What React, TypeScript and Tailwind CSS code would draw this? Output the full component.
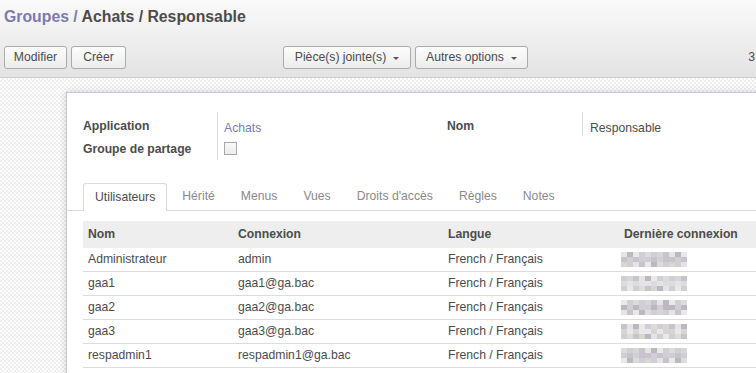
// Group form view: breadcrumb header, action buttons, sheet with fields,
// notebook tabs and the users list.

const users = [
  { name: 'Administrateur', login: 'admin' },
  { name: 'gaa1', login: 'gaa1@ga.bac' },
  { name: 'gaa2', login: 'gaa2@ga.bac' },
  { name: 'gaa3', login: 'gaa3@ga.bac' },
  { name: 'respadmin1', login: 'respadmin1@ga.bac' },
]

const tabs = ['Utilisateurs', 'Hérité', 'Menus', 'Vues', "Droits d'accès", 'Règles', 'Notes']

// greys used for the pixelated "last login" cell
const blurShades = ['#e4e4e8', '#cfcfd6', '#d8d6d2', '#bdb7c2', '#dcdcdc', '#c9c4cc', '#e9e9ea', '#d2ced6']

function Blurred({ seed }: { seed: number }) {
  const cells = []
  for (let r = 0; r < 3; r++) {
    for (let c = 0; c < 11; c++) {
      const shade = blurShades[(c * 3 + r * 5 + seed * 7 + (c * r) % 4) % blurShades.length]
      cells.push(<rect key={`${r}-${c}`} x={c * 6} y={r * 5} width={6} height={5} fill={shade} />)
    }
  }
  return (
    <svg width="66" height="15" viewBox="0 0 66 15" className="block">
      {cells}
    </svg>
  )
}

function Button({ label, caret, w }: { label: string; caret?: boolean; w: string }) {
  return (
    <button
      className={`${w} h-[23px] border border-[#ababab] rounded-[3px] bg-gradient-to-b from-[#fdfdfd] to-[#ececec] text-[12.2px] text-[#4c4c4c] flex items-center justify-center gap-[7px]`}
    >
      {label}
      {caret && (
        <span className="w-0 h-0 border-l-[3px] border-r-[3px] border-t-[3px] border-l-transparent border-r-transparent border-t-[#555] mt-[1px]" />
      )}
    </button>
  )
}

export default function App() {
  return (
    <div className="w-[756px] h-[373px] overflow-hidden bg-white font-['Liberation_Sans',Arial,sans-serif] text-[#4c4c4c]">
      {/* header */}
      <div className="h-[78px] bg-gradient-to-b from-[#fafafa] to-[#e3e3e3] border-b border-[#cfcfcf] pl-1">
        <h1 className="pt-[5px] text-[15.8px] font-bold leading-[24px]">
          <span className="text-[#7c7bad]">Groupes</span>
          <span className="text-[#7c7bad]"> / </span>
          <span className="text-[#4c4c4c]">Achats / Responsable</span>
        </h1>
        <div className="flex items-center mt-[17px]">
          <div className="flex gap-1">
            <Button label="Modifier" w="w-[63px]" />
            <Button label="Créer" w="w-[55px]" />
          </div>
          <div className="flex gap-1 ml-[157px]">
            <Button label="Pièce(s) jointe(s)" caret w="w-[128px]" />
            <Button label="Autres options" caret w="w-[113px]" />
          </div>
          <span className="ml-auto text-[12.2px] pr-[1px]">3</span>
        </div>
      </div>

      {/* sheet area */}
      <div className="h-[295px] bg-[repeating-conic-gradient(#efefef_0_25%,#ffffff_0_50%)] bg-[length:4px_4px] pt-[14px] pl-[66px]">
        <div className="w-[720px] h-[300px] bg-white border-l border-t border-[#c8c8d0] shadow-[0_0_8px_rgba(0,0,0,0.18)]">
          {/* fields */}
          <div className="flex pt-[21px] pl-4 text-[12.2px]">
            <div className="flex w-[364px]">
              <div className="w-[134px] font-bold text-[#4c4c4c] leading-[23px] pt-[1px]">
                <div>Application</div>
                <div>Groupe de partage</div>
              </div>
              <div className="border-l border-[#dcdcdc] pl-[6px] h-[48px] -mt-[2px]">
                <div className="text-[#7c7bad] leading-[23px] mt-[5px]">Achats</div>
                <div className="w-[13px] h-[13px] border border-[#a8a8a8] bg-gradient-to-b from-[#f8f8f8] to-[#ececec] mt-[2px]" />
              </div>
            </div>
            <div className="flex">
              <div className="w-[135px] font-bold leading-[23px] pt-[1px]">Nom</div>
              <div className="border-l border-[#dcdcdc] pl-[7px] h-[24px] -mt-[2px] leading-[23px] pt-[5px]">Responsable</div>
            </div>
          </div>

          {/* notebook tabs */}
          <div className="mt-[22px] border-b border-[#dadada] pl-4 flex gap-[4px] text-[12.2px]">
            {tabs.map((t, i) => (
              <div
                key={t}
                className={
                  i === 0
                    ? 'h-[28px] px-[11px] flex items-center border border-b-0 border-[#dadada] rounded-t-[3px] bg-white -mb-px text-[#4c4c4c]'
                    : 'h-[27px] px-[11px] flex items-center text-[#8a8a8a]'
                }
              >
                {t}
              </div>
            ))}
          </div>

          {/* users list */}
          <div className="ml-4 mt-[10px] text-[12.2px]">
            <div className="flex h-[27px] items-center bg-[#eeeeee] font-bold">
              <div className="w-[150px] pl-[5px]">Nom</div>
              <div className="w-[210px] pl-[5px]">Connexion</div>
              <div className="w-[176px] pl-[5px]">Langue</div>
              <div className="flex-1 pl-[5px]">Dernière connexion</div>
            </div>
            {users.map((u, i) => (
              <div key={u.name} className="flex h-[24px] items-center border-b border-[#dcdcdc]">
                <div className="w-[150px] pl-[5px]">{u.name}</div>
                <div className="w-[210px] pl-[5px]">{u.login}</div>
                <div className="w-[176px] pl-[5px]">French / Français</div>
                <div className="flex-1 pl-[2px]">
                  <Blurred seed={i} />
                </div>
              </div>
            ))}
          </div>
        </div>
      </div>
    </div>
  )
}
